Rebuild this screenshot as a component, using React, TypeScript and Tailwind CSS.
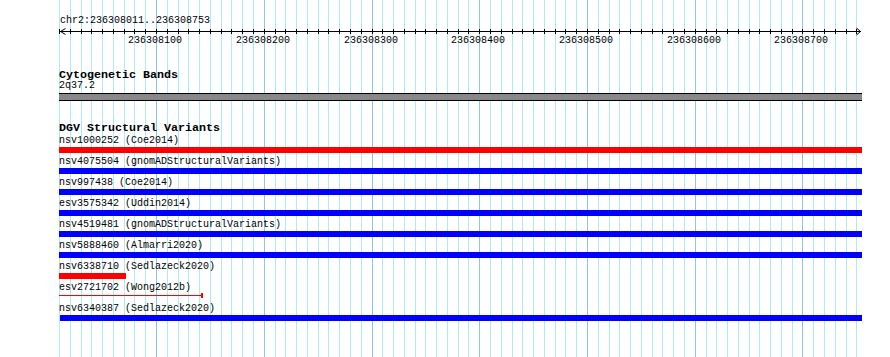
import React from 'react';

// x of 236308100 on the page and the scale of the window (743 bp over ~800 px)
const ORIGIN = 156;
const PX_PER_BP = 1.0775;
const LEFT = 59;

const xOf = (bp: number) => Math.round(ORIGIN + (bp - 236308100) * PX_PER_BP);

const gridLines = Array.from({ length: 75 }, (_, i) => 236308010 + i * 10);
const majors = [236308100, 236308200, 236308300, 236308400, 236308500, 236308600, 236308700];

type Variant = { name: string; bar: 'full-red' | 'full-blue' | 'short-red' | 'thin-red' | 'blue-offset' };

const variants: Variant[] = [
  { name: 'nsv1000252 (Coe2014)', bar: 'full-red' },
  { name: 'nsv4075504 (gnomADStructuralVariants)', bar: 'full-blue' },
  { name: 'nsv997438 (Coe2014)', bar: 'full-blue' },
  { name: 'esv3575342 (Uddin2014)', bar: 'full-blue' },
  { name: 'nsv4519481 (gnomADStructuralVariants)', bar: 'full-blue' },
  { name: 'nsv5888460 (Almarri2020)', bar: 'full-blue' },
  { name: 'nsv6338710 (Sedlazeck2020)', bar: 'short-red' },
  { name: 'esv2721702 (Wong2012b)', bar: 'thin-red' },
  { name: 'nsv6340387 (Sedlazeck2020)', bar: 'blue-offset' },
];

const GridLines: React.FC = () => (
  <svg className="absolute inset-0" width={890} height={357}>
    {gridLines.map((bp) => (
      <rect
        key={bp}
        x={xOf(bp)}
        y={0}
        width={1}
        height={357}
        fill={bp % 100 === 0 ? '#8cc6ec' : '#aeeaf2'}
      />
    ))}
  </svg>
);

const Ruler: React.FC = () => (
  <svg width={803} height={20} className="block">
    <rect x={1} y={5} width={801} height={1} fill="#000" />
    {gridLines.map((bp) => (
      <rect key={bp} x={xOf(bp) - LEFT} y={3} width={1} height={5} fill="#000" />
    ))}
    <path d="M1.5 5.5 L6.5 2.5 M1.5 5.5 L6.5 8.5" stroke="#000" strokeWidth={1} fill="none" />
    <path d="M801.5 5.5 L797.5 2 M801.5 5.5 L797.5 9" stroke="#000" strokeWidth={1} fill="none" />
    {majors.map((bp) => (
      <text
        key={bp}
        x={xOf(bp) - LEFT - 1}
        y={17}
        textAnchor="middle"
        fontSize={10}
        fontFamily="'Liberation Mono', monospace"
        fill="#000"
      >
        {bp}
      </text>
    ))}
  </svg>
);

const VariantBar: React.FC<{ kind: Variant['bar'] }> = ({ kind }) => {
  if (kind === 'thin-red') {
    return (
      <svg width={144} height={6} className="block overflow-visible">
        <rect x={0} y={1} width={144} height={1} fill="#ff0000" />
        <rect x={142} y={-1} width={2} height={5} fill="#ff0000" />
      </svg>
    );
  }
  if (kind === 'short-red') return <div className="h-[6px] w-[67px] bg-[#ff0000]" />;
  if (kind === 'blue-offset') return <div className="ml-px h-[6px] w-[802px] bg-[#0000ff]" />;
  if (kind === 'full-red') return <div className="h-[6px] w-[803px] bg-[#ff0000]" />;
  return <div className="h-[6px] w-[803px] bg-[#0000ff]" />;
};

function App() {
  return (
    <div className="relative h-[357px] w-[890px] overflow-hidden bg-white text-black font-['Liberation_Mono',monospace]">
      <GridLines />
      <div className="relative flex flex-col items-start pl-[59px] pt-[16px]">
        <div className="h-[10px] pl-px text-[10px] leading-[10px] whitespace-pre">chr2:236308011..236308753</div>
        <Ruler />

        <div className="mt-[23px] h-[12px] text-[11.67px] leading-[12px] font-bold whitespace-pre">Cytogenetic Bands</div>
        <div className="h-[10px] text-[10px] leading-[10px]">2q37.2</div>
        <div className="mt-[2px] h-[8px] w-[803px] border-y border-black bg-[#888888]" />

        <div className="mt-[21px] h-[12px] text-[11.67px] leading-[12px] font-bold whitespace-pre">DGV Structural Variants</div>
        <div className="mt-[2px] flex flex-col gap-[4px]">
          {variants.map((v) => (
            <div key={v.name} className="flex flex-col items-start">
              <div className="h-[10px] text-[10px] leading-[10px] whitespace-pre">{v.name}</div>
              <div className="mt-px">
                <VariantBar kind={v.bar} />
              </div>
            </div>
          ))}
        </div>
      </div>
    </div>
  );
}

export default App;
